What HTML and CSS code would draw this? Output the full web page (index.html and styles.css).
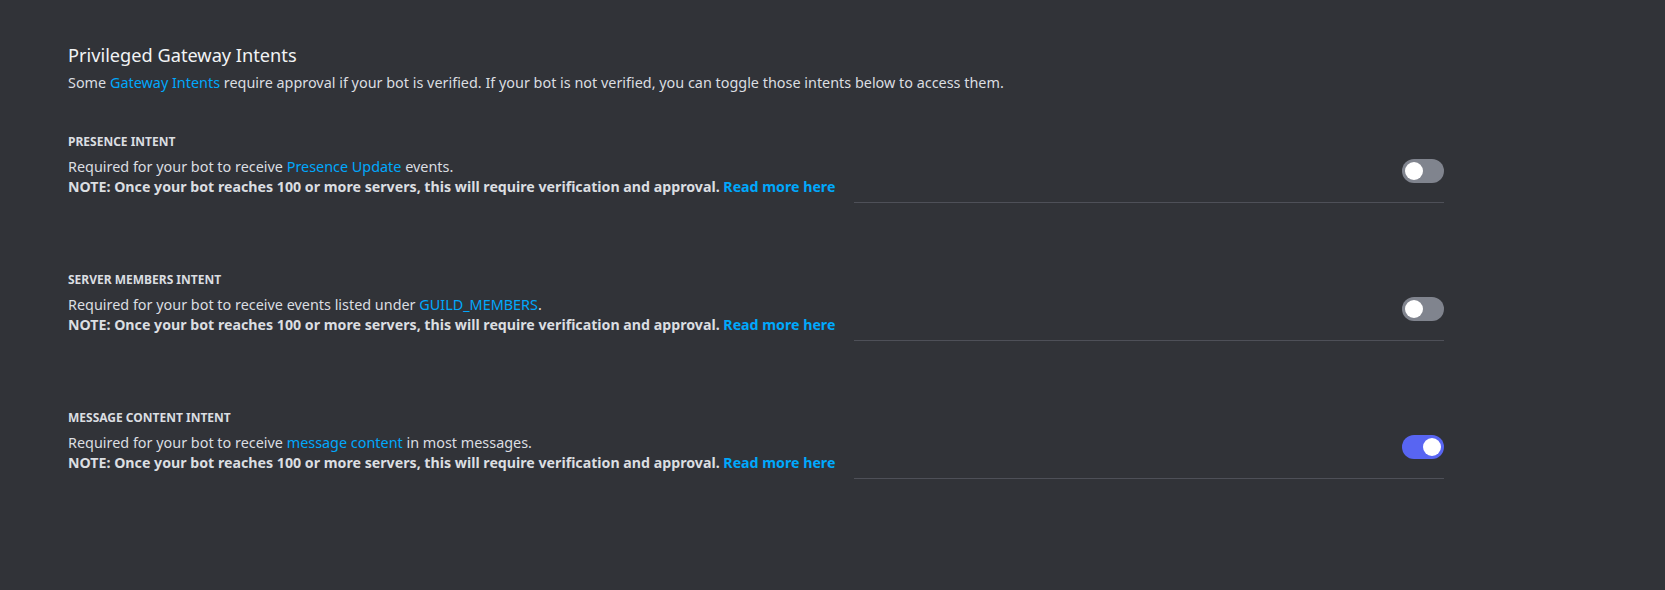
FILE: index.html
```html
<!DOCTYPE html>
<html>
<head>
<meta charset="utf-8">
<link rel="stylesheet" href="styles.css">
</head>
<body>
<main class="page">
  <h2 class="title">Privileged Gateway Intents</h2>
  <p class="desc">Some <a class="link">Gateway Intents</a> require approval if your bot is verified. If your bot is not verified, you can toggle those intents below to access them.</p>

  <section class="intent">
    <div class="text">
      <div class="label">PRESENCE INTENT</div>
      <div class="body">Required for your bot to receive <a class="link">Presence Update</a> events.</div>
      <div class="note">NOTE: Once your bot reaches 100 or more servers, this will require verification and approval. <a class="link">Read more here</a></div>
    </div>
    <div class="side"><span class="toggle"><span class="knob"></span></span></div>
  </section>

  <section class="intent">
    <div class="text">
      <div class="label">SERVER MEMBERS INTENT</div>
      <div class="body">Required for your bot to receive events listed under <a class="link">GUILD_MEMBERS</a>.</div>
      <div class="note">NOTE: Once your bot reaches 100 or more servers, this will require verification and approval. <a class="link">Read more here</a></div>
    </div>
    <div class="side"><span class="toggle"><span class="knob"></span></span></div>
  </section>

  <section class="intent">
    <div class="text">
      <div class="label">MESSAGE CONTENT INTENT</div>
      <div class="body">Required for your bot to receive <a class="link">message content</a> in most messages.</div>
      <div class="note">NOTE: Once your bot reaches 100 or more servers, this will require verification and approval. <a class="link">Read more here</a></div>
    </div>
    <div class="side"><span class="toggle on"><span class="knob"></span></span></div>
  </section>
</main>
</body>
</html>
```
FILE: styles.css
```css
* { box-sizing: border-box; }
html, body { margin: 0; height: 100%; }
body {
  background: #313338;
  font-family: "Noto Sans", "Open Sans", sans-serif;
  color: #dbdee1;
}
.page {
  padding: 43px 0 0 68px;
  width: 1444px;
}
.title {
  margin: 0;
  font-size: 18.2px;
  line-height: 24px;
  font-weight: 400;
  color: #f2f3f5;
}
.desc {
  margin: 6px 0 0;
  font-size: 14.4px;
  line-height: 20px;
  color: #dbdee1;
}
.link { color: #00a8fc; text-decoration: none; cursor: pointer; }
.intent {
  display: flex;
  margin-top: 69px;
}
.intent:first-of-type { margin-top: 41px; }
.text { flex: none; padding-bottom: 6px; }
.label {
  font-size: 12px;
  line-height: 16px;
  font-weight: 700;
  color: #dbdee1;
}
.body {
  margin-top: 7px;
  font-size: 14.4px;
  line-height: 20px;
  color: #dbdee1;
}
.note {
  font-size: 14.2px;
  line-height: 20px;
  font-weight: 700;
  color: #dbdee1;
}
.note .link { font-weight: 700; }
.side {
  flex: 1;
  margin-left: 19px;
  border-bottom: 1px solid #4e5058;
  display: flex;
  justify-content: flex-end;
  align-items: flex-start;
  padding-top: 25px;
}
.toggle {
  width: 42px;
  height: 24px;
  border-radius: 12px;
  background: #80848e;
  position: relative;
  display: block;
}
.toggle .knob {
  position: absolute;
  top: 3px;
  left: 3px;
  width: 18px;
  height: 18px;
  border-radius: 50%;
  background: #fff;
}
.toggle.on { background: #5865f2; }
.toggle.on .knob { left: 21px; }
```
